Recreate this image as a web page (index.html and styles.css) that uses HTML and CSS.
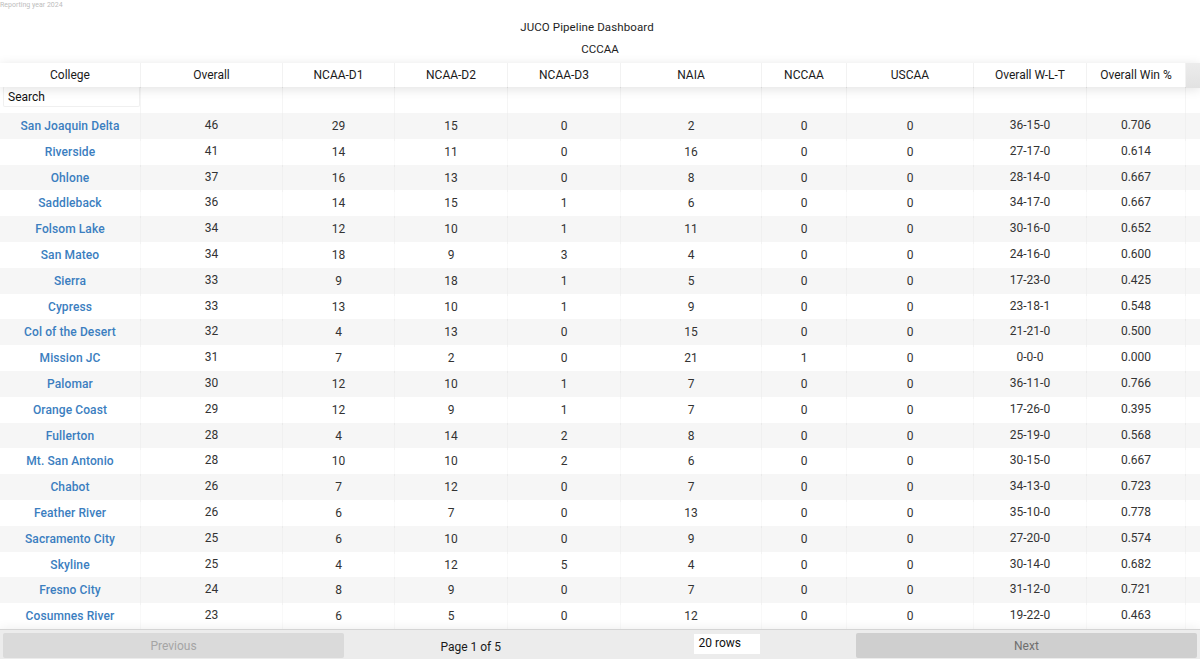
FILE: index.html
```html
<!DOCTYPE html>
<html>
<head>
<meta charset="utf-8">
<link rel="stylesheet" href="styles.css">
</head>
<body>
<div class="report">Reporting year 2024</div>
<h1 class="title">JUCO Pipeline Dashboard</h1>
<h2 class="subtitle">CCCAA</h2>
<div class="table">
  <div class="thead">
    <div class="th">College</div><div class="th">Overall</div><div class="th">NCAA-D1</div><div class="th">NCAA-D2</div><div class="th">NCAA-D3</div><div class="th">NAIA</div><div class="th">NCCAA</div><div class="th">USCAA</div><div class="th">Overall W-L-T</div><div class="th">Overall Win %</div><div class="gutter"></div>
  </div>
  <div class="filters">
    <div class="fc"><input class="search" type="text" placeholder="Search"></div><div class="fc"></div><div class="fc"></div><div class="fc"></div><div class="fc"></div><div class="fc"></div><div class="fc"></div><div class="fc"></div><div class="fc"></div><div class="fc"></div><div class="fc last"></div>
  </div>
  <div class="tbody" id="tbody">
    <div class="tr odd"><a class="td name">San Joaquin Delta</a><div class="td hi">46</div><div class="td">29</div><div class="td">15</div><div class="td">0</div><div class="td">2</div><div class="td">0</div><div class="td">0</div><div class="td hi">36-15-0</div><div class="td hi">0.706</div><div class="td last"></div></div>
    <div class="tr"><a class="td name">Riverside</a><div class="td hi">41</div><div class="td">14</div><div class="td">11</div><div class="td">0</div><div class="td">16</div><div class="td">0</div><div class="td">0</div><div class="td hi">27-17-0</div><div class="td hi">0.614</div><div class="td last"></div></div>
    <div class="tr odd"><a class="td name">Ohlone</a><div class="td hi">37</div><div class="td">16</div><div class="td">13</div><div class="td">0</div><div class="td">8</div><div class="td">0</div><div class="td">0</div><div class="td hi">28-14-0</div><div class="td hi">0.667</div><div class="td last"></div></div>
    <div class="tr"><a class="td name">Saddleback</a><div class="td hi">36</div><div class="td">14</div><div class="td">15</div><div class="td">1</div><div class="td">6</div><div class="td">0</div><div class="td">0</div><div class="td hi">34-17-0</div><div class="td hi">0.667</div><div class="td last"></div></div>
    <div class="tr odd"><a class="td name">Folsom Lake</a><div class="td hi">34</div><div class="td">12</div><div class="td">10</div><div class="td">1</div><div class="td">11</div><div class="td">0</div><div class="td">0</div><div class="td hi">30-16-0</div><div class="td hi">0.652</div><div class="td last"></div></div>
    <div class="tr"><a class="td name">San Mateo</a><div class="td hi">34</div><div class="td">18</div><div class="td">9</div><div class="td">3</div><div class="td">4</div><div class="td">0</div><div class="td">0</div><div class="td hi">24-16-0</div><div class="td hi">0.600</div><div class="td last"></div></div>
    <div class="tr odd"><a class="td name">Sierra</a><div class="td hi">33</div><div class="td">9</div><div class="td">18</div><div class="td">1</div><div class="td">5</div><div class="td">0</div><div class="td">0</div><div class="td hi">17-23-0</div><div class="td hi">0.425</div><div class="td last"></div></div>
    <div class="tr"><a class="td name">Cypress</a><div class="td hi">33</div><div class="td">13</div><div class="td">10</div><div class="td">1</div><div class="td">9</div><div class="td">0</div><div class="td">0</div><div class="td hi">23-18-1</div><div class="td hi">0.548</div><div class="td last"></div></div>
    <div class="tr odd"><a class="td name">Col of the Desert</a><div class="td hi">32</div><div class="td">4</div><div class="td">13</div><div class="td">0</div><div class="td">15</div><div class="td">0</div><div class="td">0</div><div class="td hi">21-21-0</div><div class="td hi">0.500</div><div class="td last"></div></div>
    <div class="tr"><a class="td name">Mission JC</a><div class="td hi">31</div><div class="td">7</div><div class="td">2</div><div class="td">0</div><div class="td">21</div><div class="td">1</div><div class="td">0</div><div class="td hi">0-0-0</div><div class="td hi">0.000</div><div class="td last"></div></div>
    <div class="tr odd"><a class="td name">Palomar</a><div class="td hi">30</div><div class="td">12</div><div class="td">10</div><div class="td">1</div><div class="td">7</div><div class="td">0</div><div class="td">0</div><div class="td hi">36-11-0</div><div class="td hi">0.766</div><div class="td last"></div></div>
    <div class="tr"><a class="td name">Orange Coast</a><div class="td hi">29</div><div class="td">12</div><div class="td">9</div><div class="td">1</div><div class="td">7</div><div class="td">0</div><div class="td">0</div><div class="td hi">17-26-0</div><div class="td hi">0.395</div><div class="td last"></div></div>
    <div class="tr odd"><a class="td name">Fullerton</a><div class="td hi">28</div><div class="td">4</div><div class="td">14</div><div class="td">2</div><div class="td">8</div><div class="td">0</div><div class="td">0</div><div class="td hi">25-19-0</div><div class="td hi">0.568</div><div class="td last"></div></div>
    <div class="tr"><a class="td name">Mt. San Antonio</a><div class="td hi">28</div><div class="td">10</div><div class="td">10</div><div class="td">2</div><div class="td">6</div><div class="td">0</div><div class="td">0</div><div class="td hi">30-15-0</div><div class="td hi">0.667</div><div class="td last"></div></div>
    <div class="tr odd"><a class="td name">Chabot</a><div class="td hi">26</div><div class="td">7</div><div class="td">12</div><div class="td">0</div><div class="td">7</div><div class="td">0</div><div class="td">0</div><div class="td hi">34-13-0</div><div class="td hi">0.723</div><div class="td last"></div></div>
    <div class="tr"><a class="td name">Feather River</a><div class="td hi">26</div><div class="td">6</div><div class="td">7</div><div class="td">0</div><div class="td">13</div><div class="td">0</div><div class="td">0</div><div class="td hi">35-10-0</div><div class="td hi">0.778</div><div class="td last"></div></div>
    <div class="tr odd"><a class="td name">Sacramento City</a><div class="td hi">25</div><div class="td">6</div><div class="td">10</div><div class="td">0</div><div class="td">9</div><div class="td">0</div><div class="td">0</div><div class="td hi">27-20-0</div><div class="td hi">0.574</div><div class="td last"></div></div>
    <div class="tr"><a class="td name">Skyline</a><div class="td hi">25</div><div class="td">4</div><div class="td">12</div><div class="td">5</div><div class="td">4</div><div class="td">0</div><div class="td">0</div><div class="td hi">30-14-0</div><div class="td hi">0.682</div><div class="td last"></div></div>
    <div class="tr odd"><a class="td name">Fresno City</a><div class="td hi">24</div><div class="td">8</div><div class="td">9</div><div class="td">0</div><div class="td">7</div><div class="td">0</div><div class="td">0</div><div class="td hi">31-12-0</div><div class="td hi">0.721</div><div class="td last"></div></div>
    <div class="tr"><a class="td name">Cosumnes River</a><div class="td hi">23</div><div class="td">6</div><div class="td">5</div><div class="td">0</div><div class="td">12</div><div class="td">0</div><div class="td">0</div><div class="td hi">19-22-0</div><div class="td hi">0.463</div><div class="td last"></div></div>
  </div>
  <div class="pagination">
    <button class="btn prev" disabled>Previous</button>
    <div class="center">
      <span class="pageinfo">Page 1 of 5</span>
      <span class="select">20 rows</span>
    </div>
    <button class="btn next">Next</button>
  </div>
</div>
</body>
</html>
```
FILE: styles.css
```css
* { box-sizing: border-box; }
html, body { margin: 0; padding: 0; background: #fff; }
body { font-family: Roboto, "Liberation Sans", sans-serif; color: #222; width: 1200px; height: 659px; overflow: hidden; }

.report { font-size: 7px; line-height: 10px; color: #bdbdbd; height: 10px; }
.title { margin: 10px 0 0; padding-right: 26px; font-size: 11.5px; font-weight: 400; line-height: 14px; text-align: center; color: #1e1e1e; letter-spacing: 0.1px; }
.subtitle { margin: 8px 0 0; font-size: 11.5px; font-weight: 400; line-height: 14px; text-align: center; color: #1e1e1e; }

.table { margin-top: 7px; }

.thead, .filters, .tr {
  display: grid;
  grid-template-columns: 141px 142px 112px 113px 113px 141px 85px 127px 113px 99px 14px;
}

.thead { height: 24px; position: relative; z-index: 2; box-shadow: 0 2px 12px 0 rgba(0,0,0,0.12); background: #fff; }
.th { font-size: 12px; line-height: 25px; text-align: center; color: #1a1a1a; border-right: 1px solid rgba(0,0,0,0.05); }
.gutter { background: linear-gradient(#ececec, #e2e2e2); }

.filters { height: 26px; position: relative; z-index: 1; background: #fff; }
.fc { border-right: 1px solid rgba(0,0,0,0.04); }
.fc.last { border-right: 0; }
.search {
  display: block; width: 137px; height: 21px; margin: -1px 0 0 3px;
  border: 1px solid rgba(0,0,0,0.06); border-radius: 2px; background: #fff;
  font-family: Roboto, "Liberation Sans", sans-serif; font-size: 12px; color: #111; padding: 0 4px; outline: none;
}
.search::placeholder { color: #111; }

.tr { height: 25.8px; }
.tr.odd { background: #f6f6f6; }
.td { font-size: 12px; text-align: center; color: #333; line-height: 27.8px; border-right: 1px solid rgba(0,0,0,0.025); }
.td.hi { line-height: 24px; }
.td.last { border-right: 0; }
.name { color: #3b7ec0; font-weight: 500; font-size: 12px; letter-spacing: 0.1px; text-decoration: none; }

.pagination {
  height: 31px; display: flex; padding: 3px 3px 2px;
  border-top: 1px solid rgba(0,0,0,0.1); background: #ececec;
  box-shadow: 0 0 12px 0 rgba(0,0,0,0.08); position: relative;
}
.btn {
  flex: 1; border: 0; border-radius: 2px; font-family: Roboto, "Liberation Sans", sans-serif;
  font-size: 12px; padding: 2px 0 0;
}
.prev { background: #dadada; color: #a5a5a5; }
.next { background: #cfcfcf; color: #6e6e6e; }
.center { flex: 1.5; display: flex; justify-content: space-around; align-items: center; }
.pageinfo { font-size: 12px; color: #1a1a1a; margin-left: 0; padding-top: 3px; }
.select { display: block; width: 66px; height: 20px; background: #fff; font-size: 12px; line-height: 18px; padding-left: 5px; color: #111; margin-top: -2px; }
```
